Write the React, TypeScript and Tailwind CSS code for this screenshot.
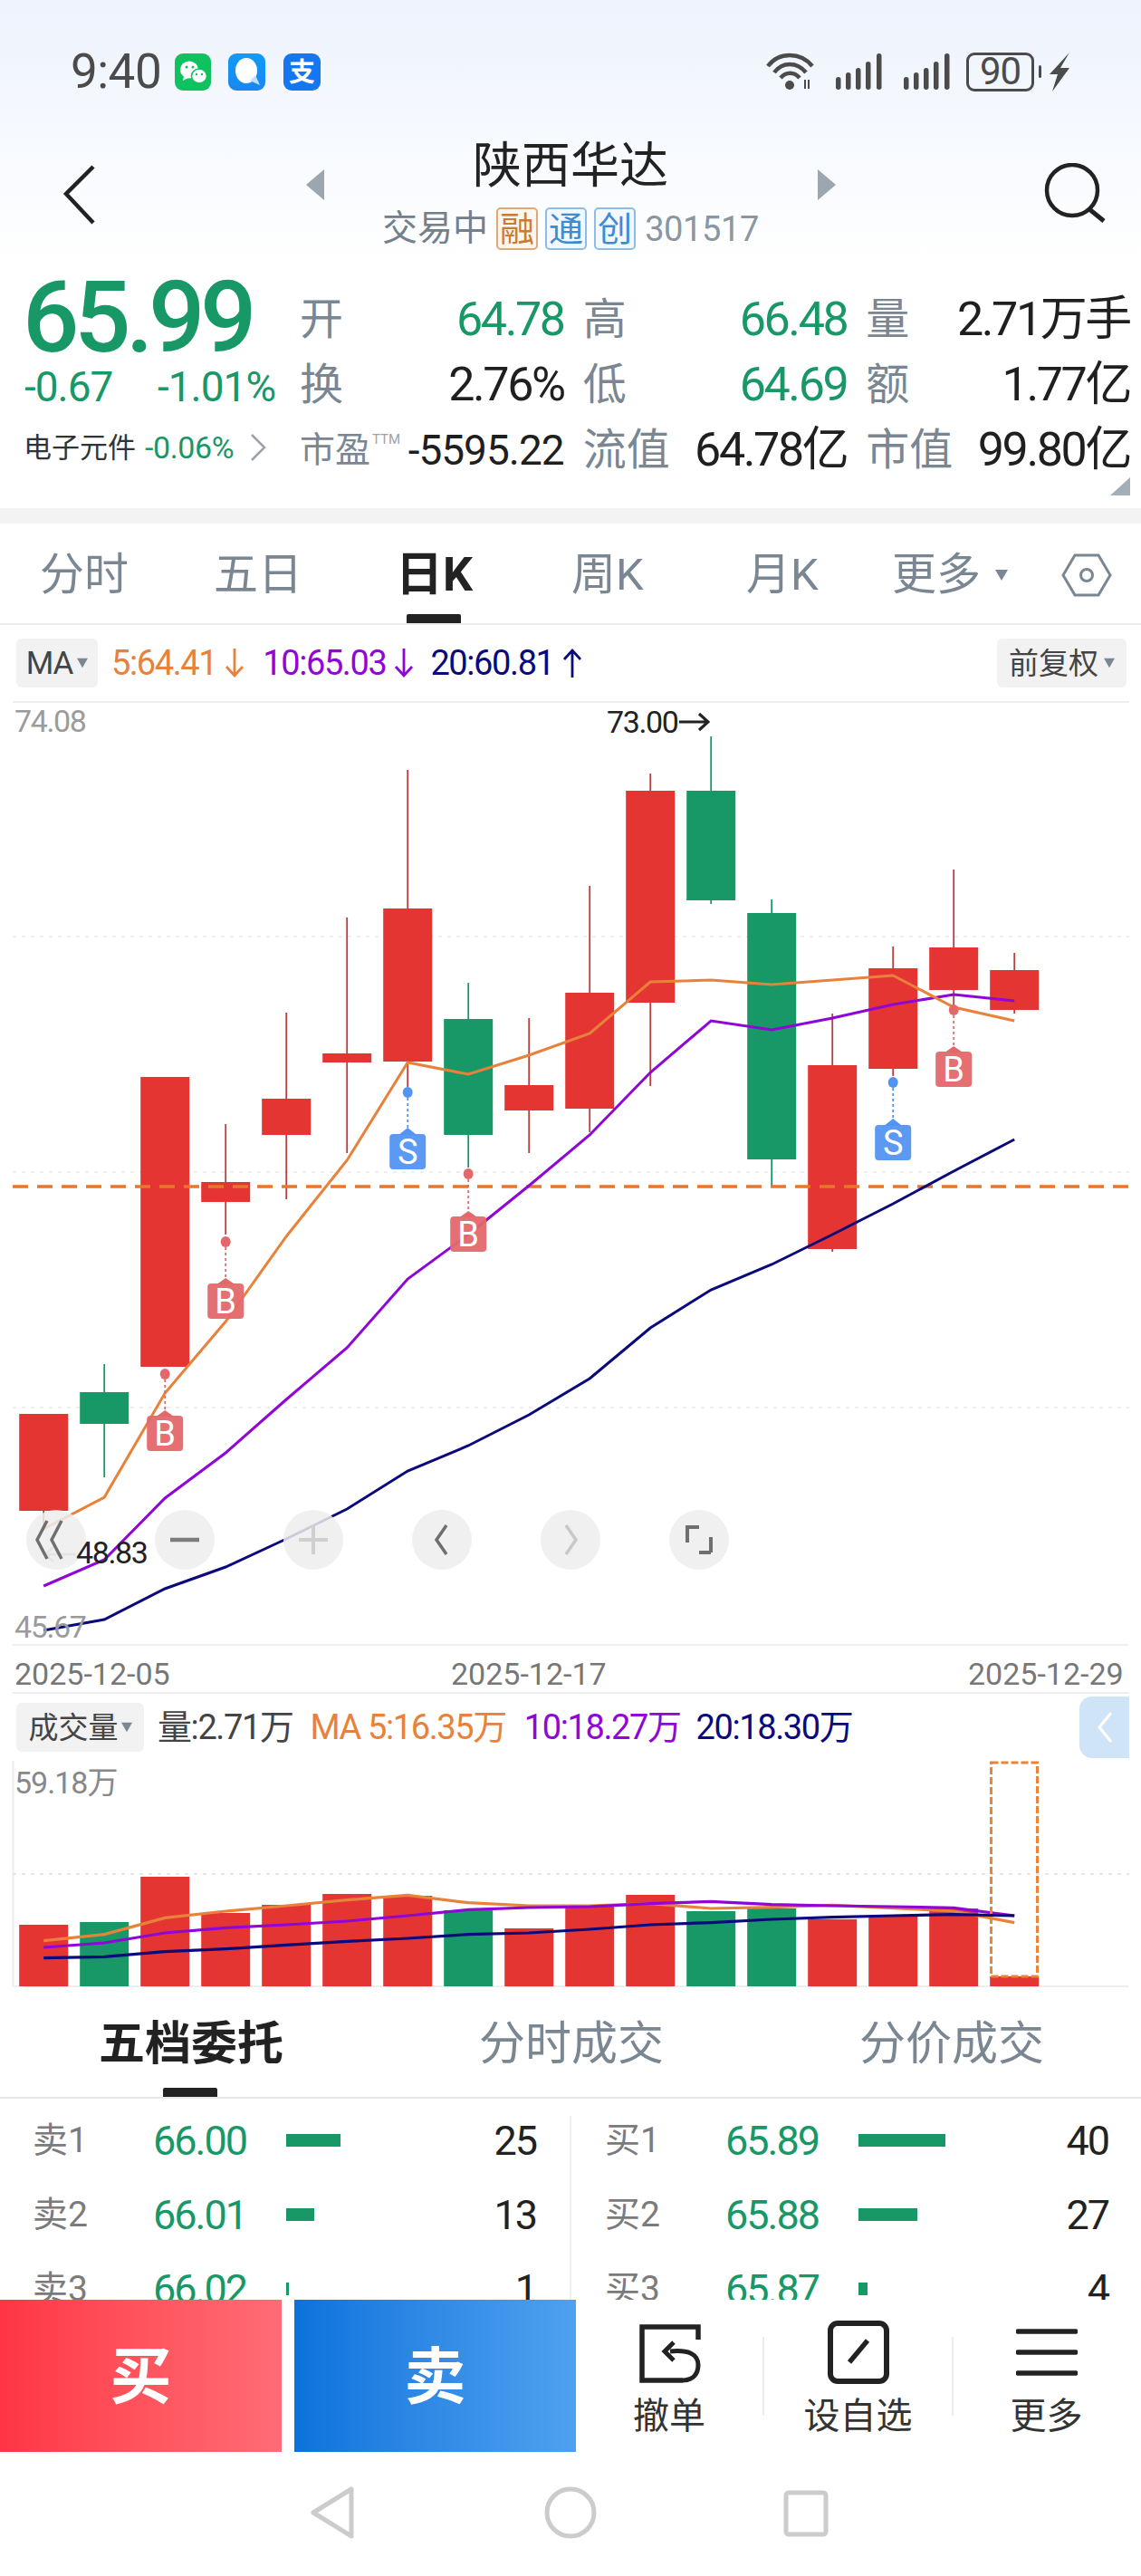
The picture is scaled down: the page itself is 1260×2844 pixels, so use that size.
const RED = '#e53533';
const GREEN = '#189767';
const ORANGE = '#e8823a';
const PURPLE = '#8f06d6';
const NAVY = '#0b0a7c';

const cx = (i: number) => 48.2 + 67 * i;

// wickTop, bodyTop, bodyBottom, wickBottom, up
const candles: [number, number, number, number, boolean][] = [
  [1561, 1561, 1668, 1690, true],
  [1506, 1537, 1572, 1631, false],
  [1189, 1189, 1509, 1509, true],
  [1241, 1305, 1327, 1363, true],
  [1118, 1213, 1253, 1324, true],
  [1013, 1163, 1173, 1273, true],
  [850, 1003, 1172, 1200, true],
  [1085, 1125, 1253, 1289, false],
  [1124, 1198, 1226, 1273, true],
  [978, 1096, 1224, 1250, true],
  [854, 873, 1107, 1199, true],
  [813, 873, 994, 998, false],
  [993, 1008, 1280, 1311, false],
  [1119, 1176, 1379, 1382, true],
  [1045, 1069, 1180, 1188, true],
  [960, 1046, 1093, 1110, true],
  [1052, 1071, 1115, 1119, true],
];

const ma5 = [1688, 1653, 1538, 1459, 1365, 1281, 1173, 1186, 1165, 1141, 1084, 1082, 1087, 1082, 1077, 1112, 1127];
const ma10 = [1751, 1722, 1654, 1604, 1545, 1488, 1412, 1363, 1309, 1253, 1184, 1127, 1137, 1124, 1109, 1098, 1105];
const ma20 = [1800, 1788, 1754, 1730, 1699, 1666, 1624, 1596, 1562, 1522, 1466, 1424, 1396, 1363, 1329, 1293, 1258];

const markers: { i: number; dot: number; tip: number; top: number; bottom: number; t: 'B' | 'S' }[] = [
  { i: 6, dot: 1206, tip: 1245, top: 1252, bottom: 1291, t: 'S' },
  { i: 14, dot: 1195, tip: 1235, top: 1242, bottom: 1281, t: 'S' },
  { i: 15, dot: 1115, tip: 1155, top: 1161, bottom: 1200, t: 'B' },
  { i: 7, dot: 1296, tip: 1337, top: 1343, bottom: 1382, t: 'B' },
  { i: 3, dot: 1371, tip: 1411, top: 1417, bottom: 1456, t: 'B' },
  { i: 2, dot: 1517, tip: 1557, top: 1563, bottom: 1602, t: 'B' },
];

const volTops = [2125, 2122, 2072, 2112, 2103, 2091, 2093, 2109, 2129, 2103, 2092, 2110, 2107, 2119, 2115, 2107, 2182];
const volUp = [true, false, true, true, true, true, true, false, true, true, true, false, false, true, true, true, true];
const volMa5 = [938, 917, 862, 840, 822, 803, 787, 812, 822, 822, 815, 831, 827, 820, 830, 840, 878];
const volMa10 = [960, 945, 912, 895, 885, 873, 855, 835, 828, 825, 815, 808, 818, 822, 825, 829, 855];
const volMa20 = [995, 991, 974, 965, 952, 940, 930, 917, 912, 900, 885, 878, 867, 860, 855, 851, 855];

const pts = (a: number[]) => a.map((y, i) => `${cx(i)},${y}`).join(' ');
const vpts = (a: number[]) => a.map((y, i) => `${cx(i)},${1830 + y / 3}`).join(' ');

function Arrow({ color, up }: { color: string; up?: boolean }) {
  return (
    <svg width="22" height="34" viewBox="0 0 22 34" className="ml-[9px]">
      {up ? (
        <path d="M11 33V3M2 13L11 3L20 13" fill="none" stroke={color} strokeWidth="2.8" />
      ) : (
        <path d="M11 1V31M2 21L11 31L20 21" fill="none" stroke={color} strokeWidth="2.8" />
      )}
    </svg>
  );
}

function Caret({ className }: { className: string }) {
  return (
    <svg width="14" height="14" viewBox="0 0 14 14" className={className}>
      <path d="M0 1H14L7 13Z" fill="#7b8894" />
    </svg>
  );
}

function StatusBar() {
  return (
    <div className="flex items-center h-[42px] pl-[78px] mt-[57px]">
      <span className="text-[53px] leading-none text-[#4b4b4b] w-[115px] tracking-[-0.5px]">9:40</span>
      <svg width="40" height="41" viewBox="0 0 40 41">
        <rect width="40" height="41" rx="9" fill="#0fc15f" />
        <ellipse cx="16" cy="18" rx="10" ry="9.5" fill="#fff" />
        <path d="M10 25L9 30L15 27Z" fill="#fff" />
        <ellipse cx="27" cy="25" rx="8.5" ry="8" fill="#fff" stroke="#0fc15f" strokeWidth="1.5" />
        <circle cx="13" cy="15" r="1.5" fill="#0fc15f" />
        <circle cx="20" cy="15" r="1.5" fill="#0fc15f" />
        <circle cx="24" cy="23" r="1.2" fill="#0fc15f" />
        <circle cx="30" cy="23" r="1.2" fill="#0fc15f" />
      </svg>
      <svg width="41" height="41" viewBox="0 0 41 41" className="ml-[19px]">
        <defs>
          <linearGradient id="qq" x1="0" y1="0" x2="0" y2="1">
            <stop offset="0" stopColor="#0f9cf5" />
            <stop offset="1" stopColor="#1a86f2" />
          </linearGradient>
        </defs>
        <rect width="41" height="41" rx="9" fill="url(#qq)" />
        <ellipse cx="20" cy="19" rx="12" ry="14" fill="#fff" />
        <path d="M24 30L35 35L30 24Z" fill="#bfe2fb" />
      </svg>
      <svg width="41" height="41" viewBox="0 0 41 41" className="ml-[20px]">
        <rect width="41" height="41" rx="9" fill="#1477f0" />
        <text x="20.5" y="31" textAnchor="middle" fontSize="29" fontWeight="700" fill="#fff">支</text>
      </svg>
      <svg width="54" height="42" viewBox="0 0 54 42" className="ml-[492px]">
        <g fill="none" stroke="#4b4b4b" strokeWidth="4.5">
          <path d="M2 15C14 -1 38 -1 51 15" />
          <path d="M9 22C18 10 34 10 44 22" />
          <path d="M16 28C22 21 31 21 37 28" />
        </g>
        <circle cx="26" cy="36" r="5" fill="#4b4b4b" />
        <path d="M43 30V40M47 30V40" stroke="#4b4b4b" strokeWidth="2" />
      </svg>
      {[0, 1].map((k) => (
        <svg key={k} width="52" height="40" viewBox="0 0 52 40" className="ml-[23px]">
          <g fill="#4b4b4b">
            <rect x="0" y="26" width="5.5" height="14" rx="2.7" />
            <rect x="11" y="21" width="5.5" height="19" rx="2.7" />
            <rect x="22" y="16" width="5.5" height="24" rx="2.7" />
            <rect x="33" y="9" width="5.5" height="31" rx="2.7" />
            <rect x="45" y="0" width="5.5" height="40" rx="2.7" />
          </g>
        </svg>
      ))}
      <div className="ml-[17px] w-[75px] h-[43px] rounded-[9px] border-[3px] border-[#4b4b4b] flex items-center justify-center text-[42px] tracking-[-1px] leading-none text-[#4b4b4b]">90</div>
      <div className="ml-[5px] w-[3px] h-[14px] bg-[#4b4b4b] rounded-[2px]" />
      <svg width="24" height="43" viewBox="0 0 24 43" className="ml-[8px]">
        <path d="M23 0L1 24H10L4 43L23 17H13Z" fill="#4b4b4b" />
      </svg>
    </div>
  );
}

function Tag({ c, tone }: { c: string; tone: 'o' | 'b' }) {
  return (
    <span
      className={
        tone === 'o'
          ? 'w-[46px] h-[47px] flex items-center justify-center rounded-[5px] border-2 border-[#e0a878] bg-[#fdf6ef] text-[#cc7a35] text-[38px] leading-none'
          : 'w-[46px] h-[47px] flex items-center justify-center rounded-[5px] border-2 border-[#8dbde6] bg-[#f2f8fe] text-[#3d8bd0] text-[38px] leading-none'
      }
    >
      {c}
    </span>
  );
}

function TitleBar() {
  return (
    <div className="relative flex justify-center h-[120px] mt-[59px]">
      <svg width="36" height="66" viewBox="0 0 36 66" className="absolute left-[70px] top-[23px]">
        <path d="M33 2L3 32L33 64" fill="none" stroke="#222" strokeWidth="4.5" />
      </svg>
      <svg width="20" height="34" viewBox="0 0 20 34" className="absolute left-[338px] top-[28px]">
        <path d="M20 0V34L0 17Z" fill="#9ba6b0" />
      </svg>
      <div className="flex flex-col items-center">
        <span className="text-[54px] leading-[54px] text-[#222] mt-[-2px]">陕西华达</span>
        <div className="flex items-center mt-[18px] h-[47px]">
          <span className="text-[39px] leading-none text-[#72808c] mr-[9px]">交易中</span>
          <Tag c="融" tone="o" />
          <span className="w-[8px]" />
          <Tag c="通" tone="b" />
          <span className="w-[8px]" />
          <Tag c="创" tone="b" />
          <span className="text-[38px] tracking-[-0.4px] leading-none text-[#8a96a0] ml-[10px]">301517</span>
        </div>
      </div>
      <svg width="20" height="34" viewBox="0 0 20 34" className="absolute left-[903px] top-[28px]">
        <path d="M0 0V34L20 17Z" fill="#9ba6b0" />
      </svg>
      <svg width="68" height="66" viewBox="0 0 68 66" className="absolute left-[1153px] top-[21px]">
        <circle cx="31" cy="30" r="28" fill="none" stroke="#222" strokeWidth="4.5" />
        <path d="M50 51L66 64" fill="none" stroke="#222" strokeWidth="5" />
      </svg>
    </div>
  );
}

function Cell({ label, value, dark, small }: { label: React.ReactNode; value: string; dark?: boolean; small?: boolean }) {
  return (
    <div className="flex items-center justify-between h-[72px] whitespace-nowrap">
      <span className={small ? 'shrink-0 -ml-[3px] text-[39px] leading-none text-[#7a8793] flex items-start' : 'shrink-0 -ml-[3px] text-[48px] leading-none text-[#7a8793]'}>{label}</span>
      <span
        className={
          small
            ? 'text-[46px] tracking-[-1px] leading-none text-[#1f1f1f]'
            : dark
              ? 'text-[52px] tracking-[-2.4px] leading-none text-[#1f1f1f]'
              : 'text-[52px] tracking-[-2.4px] leading-none text-[#189767]'
        }
      >
        {value}
      </span>
    </div>
  );
}

function Quote() {
  return (
    <div className="flex h-[271px] pl-[26px] pr-[12px] pt-[27px] bg-white">
      <div className="w-[308px] shrink-0">
        <div className="text-[110px] leading-[72px] h-[76px] font-medium text-[#189767] tracking-[-5.5px] mt-[-2px] -ml-[1px]">65.99</div>
        <div className="flex items-center mt-[14px] h-[44px] pl-[1px] text-[46px] tracking-[-1px] leading-none text-[#189767]">
          <span className="w-[147px]">-0.67</span>
          <span>-1.01%</span>
        </div>
        <div className="flex items-center mt-[28px] h-[34px] whitespace-nowrap">
          <span className="text-[31px] leading-none text-[#333]">电子元件</span>
          <span className="text-[34px] tracking-[-0.4px] leading-none text-[#189767] ml-[10px]">-0.06%</span>
          <svg width="20" height="30" viewBox="0 0 20 30" className="ml-[17px]">
            <path d="M3 1L17 15L3 29" fill="none" stroke="#9aa3ab" strokeWidth="2.5" />
          </svg>
        </div>
      </div>
      <div className="relative grid flex-1 grid-cols-3 gap-x-[24px] content-start">
        <Cell label="开" value="64.78" />
        <Cell label="高" value="66.48" />
        <Cell label="量" value="2.71万手" dark />
        <Cell label="换" value="2.76%" dark />
        <Cell label="低" value="64.69" />
        <Cell label="额" value="1.77亿" dark />
        <Cell
          small
          value="-5595.22"
          label={
            <>
              市盈<span className="text-[15px] leading-[20px] text-[#9aa3ab] mt-[-3px] ml-[2px]">TTM</span>
            </>
          }
        />
        <Cell label="流值" value="64.78亿" dark />
        <Cell label="市值" value="99.80亿" dark />
        <svg width="22" height="20" viewBox="0 0 22 20" className="absolute right-0 top-[210px]">
          <path d="M22 0V20H0Z" fill="#a4aeb7" />
        </svg>
      </div>
    </div>
  );
}

function ChartTabs() {
  const tabs = [
    { t: '分时', w: 'w-[192px]' },
    { t: '五日', w: 'w-[201px]' },
    { t: '日K', w: 'w-[194px]', on: true },
    { t: '周K', w: 'w-[193px]' },
    { t: '月K', w: 'w-[161px]' },
  ];
  return (
    <div className="relative flex items-center h-[112px] pl-[44px] pt-[3px] border-b-2 border-[#ececec] bg-white">
      {tabs.map((x) => (
        <span key={x.t} className={x.on ? `${x.w} text-[52px] leading-none font-bold text-[#222]` : `${x.w} text-[49px] leading-none text-[#7a8793]`}>
          {x.t}
        </span>
      ))}
      <span className="text-[49px] leading-none text-[#7a8793]">更多</span>
      <Caret className="ml-[16px]" />
      <svg width="56" height="48" viewBox="0 0 56 48" className="ml-[59px]">
        <path d="M15 2H41L54 24L41 46H15L2 24Z" fill="none" stroke="#7a8793" strokeWidth="3" />
        <circle cx="28" cy="24" r="6.5" fill="none" stroke="#7a8793" strokeWidth="3" />
      </svg>
      <div className="absolute left-[449px] bottom-0 w-[60px] h-[10px] bg-[#222] rounded-t-[2px]" />
    </div>
  );
}

function MaRow() {
  return (
    <div className="flex items-center h-[84px] pl-[18px] pr-[16px] bg-white">
      <div className="flex items-center justify-center w-[90px] h-[54px] bg-[#f2f2f2] rounded-[6px] text-[35px] tracking-[-1px] leading-none text-[#444]">
        MA
        <Caret className="ml-[5px] w-[12px]" />
      </div>
      <span className="flex items-center ml-[15px] text-[38px] tracking-[-1.4px] leading-none text-[#e8823a]">
        5:64.41
        <Arrow color={ORANGE} />
      </span>
      <span className="flex items-center ml-[20px] text-[38px] tracking-[-1.4px] leading-none text-[#8f06d6]">
        10:65.03
        <Arrow color={PURPLE} />
      </span>
      <span className="flex items-center ml-[18px] text-[38px] tracking-[-1.4px] leading-none text-[#0b0a7c]">
        20:60.81
        <Arrow color={NAVY} up />
      </span>
      <div className="ml-auto flex items-center justify-center w-[143px] h-[54px] bg-[#f2f2f2] rounded-[6px] text-[33px] leading-none text-[#444]">
        前复权
        <Caret className="ml-[6px] w-[12px]" />
      </div>
    </div>
  );
}

function CandleChart() {
  return (
    <div className="relative h-[1096px] bg-white">
      <svg width="1260" height="1096" viewBox="0 774 1260 1096" className="block">
        <path d="M14 775H1247M14 1816H1247M14 1869H1247" stroke="#eeeeee" strokeWidth="2" />
        {[1034, 1294, 1554].map((y) => (
          <path key={y} d={`M14 ${y}H1247`} stroke="#eeeeee" strokeWidth="2" strokeDasharray="4 6" />
        ))}
        {candles.map(([a, b, c, d, up], i) => (
          <g key={i}>
            <path d={`M${cx(i)} ${a}V${d}`} stroke={up ? '#b9403f' : GREEN} strokeWidth="1.8" />
            <rect x={cx(i) - 27} y={b} width="54" height={c - b} fill={up ? RED : GREEN} />
          </g>
        ))}
        <path d="M14 1310H1247" stroke="#e8762d" strokeWidth="3.5" strokeDasharray="17 10" />
        <polyline points={pts(ma20)} fill="none" stroke={NAVY} strokeWidth="3" />
        <polyline points={pts(ma10)} fill="none" stroke={PURPLE} strokeWidth="3" />
        <polyline points={pts(ma5)} fill="none" stroke={ORANGE} strokeWidth="3" />
        {markers.map((m) => {
          const x = cx(m.i);
          const col = m.t === 'B' ? '#e4686b' : '#5294f2';
          return (
            <g key={`${m.i}`}>
              <ellipse cx={x} cy={m.dot} rx="5.5" ry="6" fill={col} />
              <path d={`M${x} ${m.dot}V${m.tip}`} stroke={col} strokeWidth="1.8" strokeDasharray="3 3" />
              <path d={`M${x - 10} ${m.top + 1}L${x} ${m.tip}L${x + 10} ${m.top + 1}Z`} fill={col} />
              <rect x={x - 20} y={m.top} width="40" height={m.bottom - m.top} rx="4" fill={col} fillOpacity="0.95" />
              <text x={x} y={m.bottom - 6} textAnchor="middle" fontSize="38" fill="#fff">
                {m.t}
              </text>
            </g>
          );
        })}
      </svg>
      <span className="absolute left-[16px] top-[5px] text-[34px] tracking-[-1.4px] leading-[34px] text-[#9b9b9b]">74.08</span>
      <span className="absolute left-[670px] top-[6px] flex items-center text-[34px] tracking-[-1.4px] leading-[34px] text-[#222]">
        73.00
        <svg width="34" height="22" viewBox="0 0 34 22" className="ml-[2px]">
          <path d="M0 11H31M22 2L32 11L22 20" fill="none" stroke="#222" strokeWidth="3.2" />
        </svg>
      </span>
      <span className="absolute left-[16px] top-[1005px] text-[34px] tracking-[-1.4px] leading-[34px] text-[#9b9b9b]">45.67</span>
      <svg width="36" height="20" viewBox="0 0 36 20" className="absolute left-[48px] top-[932px]">
        <path d="M36 10H3M11 2L2 10L11 18" fill="none" stroke="#b5b5b5" strokeWidth="3" />
      </svg>
      <div className="absolute left-[29px] top-[893px] flex gap-[76px]">
        {[
          <path key="a" d="M17 12L6 33L17 54M33 12L22 33L33 54" fill="none" stroke="#6f6f6f" strokeWidth="3.5" transform="translate(6 0)" />,
          <path key="b" d="M17 33H49" fill="none" stroke="#7b7b7b" strokeWidth="4.5" />,
          <path key="c" d="M17 33H49M33 17V49" fill="none" stroke="#cfcfcf" strokeWidth="4" />,
          <path key="d" d="M38 17L27 33L38 49" fill="none" stroke="#6f6f6f" strokeWidth="3.5" />,
          <path key="e" d="M28 17L39 33L28 49" fill="none" stroke="#c8c8c8" strokeWidth="3.5" />,
          <path key="f" d="M33 19H20V36M46 47H33M46 30V47" fill="none" stroke="#6f6f6f" strokeWidth="4" />,
        ].map((icon, i) => (
          <svg key={i} width="66" height="66" viewBox="0 0 66 66">
            <circle cx="33" cy="33" r="33" fill="#ededed" fillOpacity="0.85" />
            {icon}
          </svg>
        ))}
      </div>
      <span className="absolute left-[84px] top-[923px] text-[34px] tracking-[-1.4px] leading-[34px] text-[#222]">48.83</span>
      <span className="absolute left-[16px] top-[1056px] text-[34px] leading-[36px] text-[#777]">2025-12-05</span>
      <span className="absolute left-[498px] top-[1056px] text-[34px] leading-[36px] text-[#777]">2025-12-17</span>
      <span className="absolute left-[1069px] top-[1056px] text-[34px] leading-[36px] text-[#777]">2025-12-29</span>
    </div>
  );
}

function VolumeRow() {
  return (
    <div className="relative flex items-center h-[74px] pl-[18px] bg-white">
      <div className="flex items-center justify-center w-[141px] h-[54px] bg-[#f2f2f2] rounded-[6px] text-[33px] leading-none text-[#444]">
        成交量
        <Caret className="ml-[3px] w-[12px]" />
      </div>
      <span className="ml-[15px] text-[38px] tracking-[-1.4px] leading-none text-[#444]">量:2.71万</span>
      <span className="ml-[19px] text-[38px] tracking-[-1.4px] leading-none text-[#e8823a]">MA 5:16.35万</span>
      <span className="ml-[20px] text-[38px] tracking-[-1.4px] leading-none text-[#8f06d6]">10:18.27万</span>
      <span className="ml-[17px] text-[38px] tracking-[-1.4px] leading-none text-[#0b0a7c]">20:18.30万</span>
      <div className="absolute left-[1192px] top-[3px] w-[55px] h-[68px] rounded-l-[14px] bg-[#cfe4f7] flex items-center justify-center">
        <svg width="18" height="34" viewBox="0 0 18 34">
          <path d="M16 1L3 17L16 33" fill="none" stroke="#fff" strokeWidth="3" />
        </svg>
      </div>
    </div>
  );
}

function VolumeChart() {
  return (
    <div className="relative h-[250px] bg-white">
      <svg width="1260" height="250" viewBox="0 1944 1260 250" className="block">
        <path d="M14.5 1944V2193H1246" fill="none" stroke="#eeeeee" strokeWidth="2" />
        <path d="M14 2069H1247" stroke="#e6e6e6" strokeWidth="2" strokeDasharray="4 6" />
        {volTops.map((y, i) => (
          <rect key={i} x={cx(i) - 27} y={y} width="54" height={2193 - y} fill={volUp[i] ? RED : GREEN} />
        ))}
        <polyline points={vpts(volMa5)} fill="none" stroke={ORANGE} strokeWidth="3.2" />
        <polyline points={vpts(volMa10)} fill="none" stroke={PURPLE} strokeWidth="3.2" />
        <polyline points={vpts(volMa20)} fill="none" stroke={NAVY} strokeWidth="3.2" />
        <rect x="1094.5" y="1946" width="51" height="236" fill="none" stroke="#ec8438" strokeWidth="3" strokeDasharray="8 3" />
      </svg>
      <span className="absolute left-[16px] top-[7px] text-[34px] tracking-[-1px] leading-[34px] text-[#888]">59.18万</span>
    </div>
  );
}

function BookTabs() {
  return (
    <div className="relative flex items-center h-[123px] border-b-2 border-[#e8e8e8] bg-white">
      <span className="absolute left-[109px] top-[37px] text-[51px] leading-none font-bold text-[#222]">五档委托</span>
      <span className="absolute left-[529px] top-[37px] text-[51px] leading-none text-[#7a8793]">分时成交</span>
      <span className="absolute left-[949px] top-[37px] text-[51px] leading-none text-[#7a8793]">分价成交</span>
      <div className="absolute left-[180px] bottom-0 w-[60px] h-[10px] bg-[#222] rounded-t-[2px]" />
    </div>
  );
}

function BookRow({ l, p, w, q }: { l: string; p: string; w: number; q: string }) {
  return (
    <div className="flex items-center h-[82px] shrink-0">
      <span className="w-[133px] text-[39px] leading-none text-[#7b7b7b]">{l}</span>
      <span className="w-[147px] text-[45px] tracking-[-2px] leading-none text-[#189767]">{p}</span>
      <div className="h-[14px] bg-[#189767]" style={{ width: w }} />
      <span className="ml-auto text-[45px] tracking-[-2px] leading-none text-[#222]">{q}</span>
    </div>
  );
}

function Book() {
  const sell = [
    ['卖1', '66.00', 60, '25'],
    ['卖2', '66.01', 31, '13'],
    ['卖3', '66.02', 3, '1'],
  ] as const;
  const buy = [
    ['买1', '65.89', 96, '40'],
    ['买2', '65.88', 65, '27'],
    ['买3', '65.87', 10, '4'],
  ] as const;
  return (
    <div className="flex h-[222px] overflow-hidden bg-white">
      <div className="w-[629px] pl-[36px] pr-[37px] pt-[5px] flex flex-col">
        {sell.map(([l, p, w, q]) => (
          <BookRow key={l} l={l} p={p} w={w} q={q} />
        ))}
      </div>
      <div className="w-[2px] mt-[19px] bg-[#f0f0f0]" />
      <div className="flex-1 pl-[37px] pr-[36px] pt-[5px] flex flex-col">
        {buy.map(([l, p, w, q]) => (
          <BookRow key={l} l={l} p={p} w={w} q={q} />
        ))}
      </div>
    </div>
  );
}

function ActionItem({ label, icon, w }: { label: string; icon: React.ReactNode; w: string }) {
  return (
    <div className={`${w} flex flex-col items-center`}>
      <div className="h-[72px] flex items-end">{icon}</div>
      <span className="mt-[16px] text-[40px] leading-none text-[#333]">{label}</span>
    </div>
  );
}

function Actions() {
  return (
    <div className="flex h-[168px] bg-white">
      <button className="w-[311px] h-full pt-[4px] bg-linear-to-r from-[#ff3444] to-[#ff6b75] text-white text-[68px] font-bold leading-none">买</button>
      <button className="ml-[14px] w-[311px] h-full pt-[4px] bg-linear-to-r from-[#0873dc] to-[#4ea1ef] text-white text-[68px] font-bold leading-none">卖</button>
      <div className="flex items-start pt-[21px]">
        <ActionItem
          w="w-[206px]"
          label="撤单"
          icon={
            <svg width="68" height="66" viewBox="0 0 68 66" className="ml-[2px]">
              <path d="M65 17V3H3V62H48" fill="none" stroke="#222" strokeWidth="5.5" />
              <path d="M48 62C60 62 65 54 65 45C65 34 56 28 34 30" fill="none" stroke="#222" strokeWidth="5" />
              <path d="M38 20L28 30L38 40" fill="none" stroke="#222" strokeWidth="5" />
            </svg>
          }
        />
        <div className="w-[2px] h-[87px] mt-[20px] bg-[#ececec]" />
        <ActionItem
          w="w-[207px]"
          label="设自选"
          icon={
            <svg width="68" height="70" viewBox="0 0 68 70">
              <rect x="3" y="3" width="62" height="64" rx="8" fill="none" stroke="#222" strokeWidth="6" />
              <path d="M24 46L44 22" fill="none" stroke="#222" strokeWidth="5.5" />
            </svg>
          }
        />
        <div className="w-[2px] h-[87px] mt-[20px] bg-[#ececec]" />
        <ActionItem
          w="w-[205px]"
          label="更多"
          icon={
            <svg width="68" height="54" viewBox="0 0 68 54" className="mb-[8px]">
              <path d="M2 4H66M2 27H66M2 50H66" fill="none" stroke="#222" strokeWidth="5.5" strokeLinecap="round" />
            </svg>
          }
        />
      </div>
    </div>
  );
}

function NavBar() {
  return (
    <div className="relative flex items-start h-[136px] bg-white pt-[38px] pl-[343px]">
      <svg width="48" height="58" viewBox="0 0 48 58">
        <path d="M45 3V55L3 29Z" fill="none" stroke="#cccccc" strokeWidth="5" strokeLinejoin="round" />
      </svg>
      <svg width="58" height="58" viewBox="0 0 58 58" className="ml-[210px]">
        <circle cx="29" cy="29" r="26" fill="none" stroke="#cccccc" strokeWidth="5" />
      </svg>
      <svg width="50" height="52" viewBox="0 0 50 52" className="ml-[206px] mt-[4px]">
        <rect x="3" y="3" width="44" height="46" rx="3" fill="none" stroke="#cccccc" strokeWidth="5" />
      </svg>
    </div>
  );
}

export default function App() {
  return (
    <div className="w-[1260px] h-[2844px] overflow-hidden bg-white font-[Roboto,'Noto_Sans_CJK_SC',sans-serif]">
      <div className="h-[290px] bg-linear-to-b from-[#edf3fd] to-white pt-[1px] flex flex-col">
        <StatusBar />
        <TitleBar />
      </div>
      <Quote />
      <div className="h-[17px] bg-[#f3f3f4]" />
      <ChartTabs />
      <MaRow />
      <CandleChart />
      <VolumeRow />
      <VolumeChart />
      <BookTabs />
      <Book />
      <Actions />
      <NavBar />
    </div>
  );
}
